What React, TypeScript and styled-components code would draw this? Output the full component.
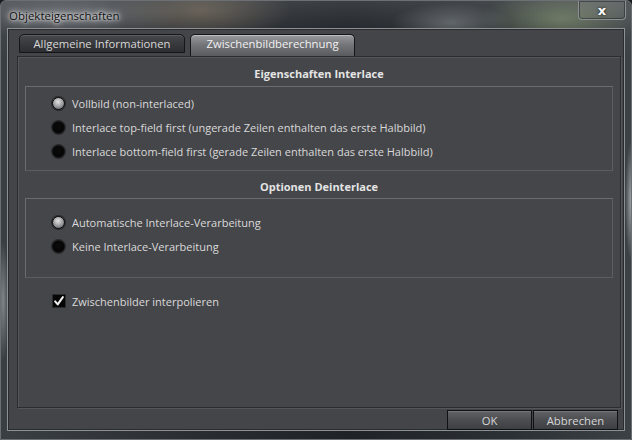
import React from "react";
import styled, { createGlobalStyle } from "styled-components";

const Global = createGlobalStyle`
  html, body { margin: 0; padding: 0; background: #1a1c1f; }
  body { font-family: "Open Sans", "Noto Sans", sans-serif; }
`;

const Window = styled.div`
  position: relative;
  width: 632px;
  height: 440px;
  box-sizing: border-box;
  padding: 0 6px 8px 6px;
  display: flex;
  flex-direction: column;
  border-radius: 6px 6px 0 0;
  border: 1px solid #6c7075;
  background:
    linear-gradient(180deg, rgba(255,255,255,0.12) 0px, rgba(255,255,255,0.03) 28px, rgba(0,0,0,0) 60px),
    radial-gradient(ellipse 110px 26px at 70px 14px, rgba(170,172,176,0.35), transparent),
    radial-gradient(ellipse 90px 30px at 200px 10px, rgba(150,130,100,0.45), transparent),
    radial-gradient(ellipse 80px 30px at 560px 18px, rgba(150,170,120,0.5), transparent),
    radial-gradient(ellipse 60px 20px at 450px 22px, rgba(180,185,190,0.35), transparent),
    radial-gradient(ellipse 6px 60px at 630px 200px, rgba(220,225,230,0.6), transparent),
    radial-gradient(ellipse 6px 60px at 2px 300px, rgba(200,205,210,0.5), transparent),
    linear-gradient(90deg, #3a3f44 0%, #2a2e33 30%, #1f2328 55%, #2b3034 80%, #3c4146 100%);
  overflow: hidden;
`;

const TitleBar = styled.div`
  height: 27px;
  display: flex;
  align-items: center;
  justify-content: space-between;
`;

const Title = styled.span`
  font-family: "Open Sans", "Noto Sans", sans-serif;
  font-size: 11.5px;
  color: #111;
  padding-left: 2px;
  margin-top: 2px;
  text-shadow: 0 0 6px rgba(255,255,255,0.9), 0 0 10px rgba(255,255,255,0.7), 0 0 3px rgba(255,255,255,0.9);
`;

const CloseButton = styled.div`
  align-self: flex-start;
  margin-right: -1px;
  width: 48px;
  height: 19px;
  box-sizing: border-box;
  border: 1px solid #8b8f93;
  border-top: none;
  border-radius: 0 0 4px 4px;
  background: linear-gradient(180deg, rgba(255,255,255,0.10), rgba(255,255,255,0.04));
  box-shadow: inset 0 0 0 1px rgba(0,0,0,0.35);
  display: flex;
  align-items: center;
  justify-content: center;
  color: #fff;
  font-family: "DejaVu Sans", sans-serif;
  font-weight: bold;
  font-size: 13px;
  line-height: 1;
  text-shadow: 0 0 3px rgba(0,0,0,0.8);
`;

const Client = styled.div`
  flex: 1;
  display: flex;
  flex-direction: column;
  background: #444549;
  border: 1px solid #8d9094;
  box-shadow: inset 0 0 0 1px #2a2b2e;
  padding: 5px 6px 0 9px;
`;

const TabRow = styled.div`
  display: flex;
  gap: 5px;
  padding-left: 2px;
  height: 22px;
  align-items: flex-start;
`;

const Tab = styled.div<{ $active?: boolean }>`
  box-sizing: border-box;
  width: ${(p) => (p.$active ? 165 : 166)}px;
  height: ${(p) => (p.$active ? 22 : 19)}px;
  border: 1px solid #151617;
  border-bottom: ${(p) => (p.$active ? "none" : "1px solid #151617")};
  border-radius: 5px 5px 0 0;
  background: ${(p) =>
    p.$active
      ? "linear-gradient(180deg, #9a9b9e 0%, #75767a 45%, #5a5b5f 100%)"
      : "linear-gradient(180deg, #47484c 0%, #36373a 60%, #2e2f32 100%)"};
  box-shadow: inset 0 1px 0 ${(p) => (p.$active ? "rgba(255,255,255,0.35)" : "rgba(255,255,255,0.12)")};
  color: ${(p) => (p.$active ? "#f2f2f2" : "#d8d8d8")};
  font-size: 11.3px;
  display: flex;
  justify-content: center;
  align-items: flex-start;
  padding-top: 1px;
  line-height: 16px;
`;

const TabPanel = styled.div`
  box-sizing: border-box;
  height: 352px;
  margin-right: -3px;
  border: 1px solid #2b2c2f;
  box-shadow: inset 1px 1px 0 #55565a, 1px 1px 0 #55565a;
  background: #45464a;
  display: flex;
  flex-direction: column;
  padding: 0 7px 0 7px;
`;

const GroupTitle = styled.div<{ $mt: number }>`
  text-align: center;
  font-weight: bold;
  font-size: 11px;
  color: #e4e4e4;
  height: 16px;
  line-height: 16px;
  margin-top: ${(p) => p.$mt}px;
`;

const GroupBox = styled.div<{ $h: number; $mt: number; $pt: number }>`
  box-sizing: border-box;
  height: ${(p) => p.$h}px;
  margin-top: ${(p) => p.$mt}px;
  border: 1px solid #6a6b6f;
  border-right-color: #5c5d61;
  border-bottom-color: #5c5d61;
  padding: ${(p) => p.$pt}px 0 0 26px;
  display: flex;
  flex-direction: column;
  gap: 8px;
`;

const OptionRow = styled.label`
  display: flex;
  align-items: center;
  gap: 7px;
  height: 16px;
  font-size: 11px;
  color: #d9d9d9;
  white-space: nowrap;
`;

const Radio = styled.span<{ $on?: boolean }>`
  box-sizing: border-box;
  width: 13px;
  height: 13px;
  border-radius: 50%;
  flex: none;
  border: 1px solid #0e0e0f;
  background: ${(p) =>
    p.$on
      ? "radial-gradient(circle at 45% 35%, #e2e2e2 0%, #b4b4b6 35%, #6e6f72 80%, #4a4b4e 100%)"
      : "radial-gradient(circle at 50% 40%, #0b0b0b 0%, #050505 70%, #2a2a2c 100%)"};
  box-shadow: 0 0 0 1px rgba(30,30,32,0.7);
`;

const CheckRow = styled(OptionRow)`
  margin: 15px 0 0 27px;
  gap: 6px;
`;

const CheckBox = styled.span`
  width: 14px;
  height: 14px;
  flex: none;
  background: #050505;
  border: 1px solid #2b2b2d;
  box-sizing: border-box;
  display: flex;
  align-items: center;
  justify-content: center;
`;

const Footer = styled.div`
  display: flex;
  justify-content: flex-end;
  gap: 1px;
  padding-top: 2px;
`;

const Button = styled.div`
  box-sizing: border-box;
  width: 85px;
  height: 20px;
  border: 1px solid #101112;
  background: linear-gradient(180deg, #626367 0%, #4c4d51 50%, #3e3f43 100%);
  box-shadow: inset 0 1px 0 rgba(255,255,255,0.12);
  color: #d6d6d6;
  font-size: 11.3px;
  display: flex;
  align-items: center;
  justify-content: center;
`;

export default function App() {
  return (
    <>
      <Global />
      <Window>
        <TitleBar>
          <Title>Objekteigenschaften</Title>
          <CloseButton>x</CloseButton>
        </TitleBar>
        <Client>
          <TabRow>
            <Tab>Allgemeine Informationen</Tab>
            <Tab $active>Zwischenbildberechnung</Tab>
          </TabRow>
          <TabPanel>
            <GroupTitle $mt={9}>Eigenschaften Interlace</GroupTitle>
            <GroupBox $h={85} $mt={4} $pt={8}>
              <OptionRow><Radio $on />Vollbild (non-interlaced)</OptionRow>
              <OptionRow><Radio />Interlace top-field first (ungerade Zeilen enthalten das erste Halbbild)</OptionRow>
              <OptionRow><Radio />Interlace bottom-field first (gerade Zeilen enthalten das erste Halbbild)</OptionRow>
            </GroupBox>
            <GroupTitle $mt={8}>Optionen Deinterlace</GroupTitle>
            <GroupBox $h={80} $mt={3} $pt={15}>
              <OptionRow><Radio $on />Automatische Interlace-Verarbeitung</OptionRow>
              <OptionRow><Radio />Keine Interlace-Verarbeitung</OptionRow>
            </GroupBox>
            <CheckRow>
              <CheckBox>
                <svg width="14" height="14" viewBox="0 0 14 14">
                  <path d="M2.5 7.5 L5.5 11 L11.5 2.5" fill="none" stroke="#f0f0f0" strokeWidth="2.4" strokeLinecap="round" strokeLinejoin="round" />
                </svg>
              </CheckBox>
              Zwischenbilder interpolieren
            </CheckRow>
          </TabPanel>
          <Footer>
            <Button>OK</Button>
            <Button>Abbrechen</Button>
          </Footer>
        </Client>
      </Window>
    </>
  );
}
